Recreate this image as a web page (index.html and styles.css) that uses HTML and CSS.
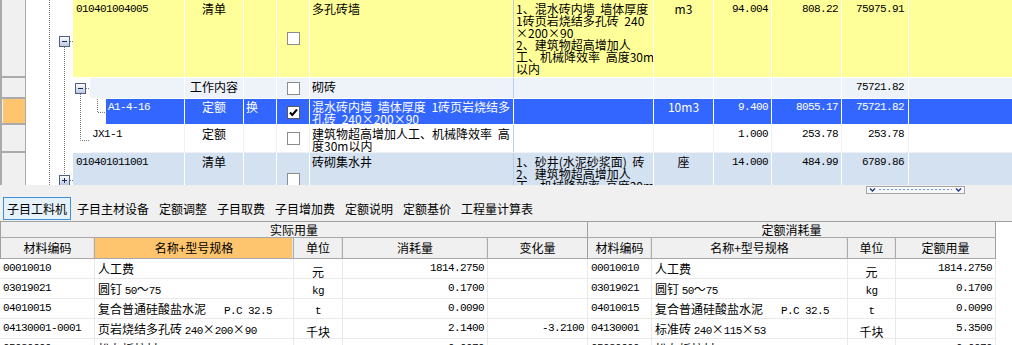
FILE: index.html
```html
<!DOCTYPE html>
<html lang="zh-CN">
<head>
<meta charset="utf-8">
<title>子目工料机</title>
<link rel="stylesheet" href="styles.css">
</head>
<body>
<div class="top">
  <div class="row r1">
    <div class="gut"></div>
    <div class="tree i0"></div>
    <div class="cells y">
      <div class="c code w0 m">010401004005</div>
      <div class="c type">清单</div>
      <div class="c hx"></div>
      <div class="c chk"><span class="cb"></span></div>
      <div class="c name">多孔砖墙</div>
      <div class="c desc">1、混水砖内墙 墙体厚度<br>1砖页岩烧结多孔砖 240<br>×200×90<br>2、建筑物超高增加人<br>工、机械降效率 高度30m<br>以内</div>
      <div class="c unit">m3</div>
      <div class="c qty m">94.004</div>
      <div class="c price m">808.22</div>
      <div class="c tot m">75975.91</div>
      <div class="c rest"></div>
    </div>
  </div>
  <div class="row r2">
    <div class="gut"></div>
    <div class="tree i1"></div>
    <div class="cells wk">
      <div class="c code w1 m"></div>
      <div class="c type">工作内容</div>
      <div class="c hx"></div>
      <div class="c chk"><span class="cb"></span></div>
      <div class="c name">砌砖</div>
      <div class="c desc"></div>
      <div class="c unit"></div>
      <div class="c qty m"></div>
      <div class="c price m"></div>
      <div class="c tot m">75721.82</div>
      <div class="c rest"></div>
    </div>
  </div>
  <div class="row r3">
    <div class="gut on"></div>
    <div class="tree i2"></div>
    <div class="cells sel">
      <div class="c code w2 m">A1-4-16</div>
      <div class="c type">定额</div>
      <div class="c hx">换</div>
      <div class="c chk"><span class="cb ck"><svg width="11" height="11" viewBox="0 0 11 11"><path d="M2 5.5L4.3 8L9 2.5" fill="none" stroke="#000" stroke-width="2"/></svg></span></div>
      <div class="c name">混水砖内墙 墙体厚度 1砖页岩烧结多<br>孔砖 240×200×90</div>
      <div class="c desc"></div>
      <div class="c unit">10m3</div>
      <div class="c qty m">9.400</div>
      <div class="c price m">8055.17</div>
      <div class="c tot m">75721.82</div>
      <div class="c rest"></div>
    </div>
  </div>
  <div class="row r4">
    <div class="gut"></div>
    <div class="tree i1"></div>
    <div class="cells w">
      <div class="c code w1 m">JX1-1</div>
      <div class="c type">定额</div>
      <div class="c hx"></div>
      <div class="c chk"><span class="cb"></span></div>
      <div class="c name">建筑物超高增加人工、机械降效率 高<br>度30m以内</div>
      <div class="c desc"></div>
      <div class="c unit"></div>
      <div class="c qty m">1.000</div>
      <div class="c price m">253.78</div>
      <div class="c tot m">253.78</div>
      <div class="c rest"></div>
    </div>
  </div>
  <div class="row r5">
    <div class="gut"></div>
    <div class="tree i0"></div>
    <div class="cells b">
      <div class="c code w0 m">010401011001</div>
      <div class="c type">清单</div>
      <div class="c hx"></div>
      <div class="c chk"><span class="cb"></span></div>
      <div class="c name">砖砌集水井</div>
      <div class="c desc">1、砂井(水泥砂浆面) 砖<br>2、建筑物超高增加人<br>工、机械降效率 高度30m<br>以内</div>
      <div class="c unit">座</div>
      <div class="c qty m">14.000</div>
      <div class="c price m">484.99</div>
      <div class="c tot m">6789.86</div>
      <div class="c rest"></div>
    </div>
  </div>
  <svg class="tree-lines" width="110" height="185" viewBox="0 0 110 185">
    <defs>
      <linearGradient id="bx" x1="0" y1="0" x2="0" y2="1">
        <stop offset="0" stop-color="#ffffff"/>
        <stop offset="1" stop-color="#b9c6dc"/>
      </linearGradient>
    </defs>
    <g stroke="#7a7a7a" stroke-dasharray="1 1" fill="none">
      <path d="M49.5 0V185"/>
      <path d="M64.5 47V175"/>
      <path d="M70 41.5H73"/>
      <path d="M86 88.5H90"/>
      <path d="M80.5 94V140.5H90"/>
      <path d="M97.5 99V112.5H106"/>
      <path d="M70 180.5H73"/>
    </g>
    <g stroke="#4f5f84" fill="url(#bx)">
      <rect x="59.5" y="36.5" width="10" height="10"/>
      <rect x="75.5" y="83.5" width="10" height="10"/>
      <rect x="59.5" y="175.5" width="10" height="10"/>
    </g>
    <g stroke="#1b2a5c" fill="none">
      <path d="M62 41.5H67"/>
      <path d="M78 88.5H83"/>
      <path d="M62 180.5H67M64.5 178V183"/>
    </g>
  </svg>
</div>

<div class="split">
  <svg class="handle" width="99" height="8" viewBox="0 0 99 8">
    <rect x="0.5" y="0.5" width="98" height="7" fill="#f8f8f8" stroke="#a4a4a4"/>
    <path d="M4 2.5L6.5 5L9 2.5M90 2.5L92.5 5L95 2.5" fill="none" stroke="#1c3780" stroke-width="1.4"/>
    <path d="M13 3.5H86" stroke="#6a94dc" stroke-dasharray="2 2"/>
  </svg>
</div>

<div class="tabs">
  <div class="tab on">子目工料机</div>
  <div class="tab">子目主材设备</div>
  <div class="tab">定额调整</div>
  <div class="tab">子目取费</div>
  <div class="tab">子目增加费</div>
  <div class="tab">定额说明</div>
  <div class="tab">定额基价</div>
  <div class="tab">工程量计算表</div>
</div>

<div class="grid">
  <div class="hd1 first s5">实际用量</div>
  <div class="hd1 s4">定额消耗量</div>

  <div class="hd2 first">材料编码</div>
  <div class="hd2 or">名称+型号规格</div>
  <div class="hd2">单位</div>
  <div class="hd2">消耗量</div>
  <div class="hd2 ge">变化量</div>
  <div class="hd2">材料编码</div>
  <div class="hd2">名称+型号规格</div>
  <div class="hd2">单位</div>
  <div class="hd2 ge">定额用量</div>

  <div class="d l m">00010010</div>
  <div class="d l">人工费</div>
  <div class="d c">元</div>
  <div class="d r m">1814.2750</div>
  <div class="d r m"></div>
  <div class="d l m">00010010</div>
  <div class="d l">人工费</div>
  <div class="d c">元</div>
  <div class="d r m">1814.2750</div>

  <div class="d l m">03019021</div>
  <div class="d l">圆钉 <span class="m">50</span>～<span class="m">75</span></div>
  <div class="d c m">kg</div>
  <div class="d r m">0.1700</div>
  <div class="d r m"></div>
  <div class="d l m">03019021</div>
  <div class="d l">圆钉 <span class="m">50</span>～<span class="m">75</span></div>
  <div class="d c m">kg</div>
  <div class="d r m">0.1700</div>

  <div class="d l m">04010015</div>
  <div class="d l">复合普通硅酸盐水泥<span class="m">   P.C 32.5</span></div>
  <div class="d c m">t</div>
  <div class="d r m">0.0090</div>
  <div class="d r m"></div>
  <div class="d l m">04010015</div>
  <div class="d l">复合普通硅酸盐水泥<span class="m">   P.C 32.5</span></div>
  <div class="d c m">t</div>
  <div class="d r m">0.0090</div>

  <div class="d l m">04130001-0001</div>
  <div class="d l">页岩烧结多孔砖 <span class="m">240</span>×<span class="m">200</span>×<span class="m">90</span></div>
  <div class="d c">千块</div>
  <div class="d r m">2.1400</div>
  <div class="d r m">-3.2100</div>
  <div class="d l m">04130001</div>
  <div class="d l">标准砖 <span class="m">240</span>×<span class="m">115</span>×<span class="m">53</span></div>
  <div class="d c">千块</div>
  <div class="d r m">5.3500</div>

  <div class="d l m">05030600</div>
  <div class="d l">松杂板枋材</div>
  <div class="d c m">m3</div>
  <div class="d r m">0.0070</div>
  <div class="d r m"></div>
  <div class="d l m">05030600</div>
  <div class="d l">松杂板枋材</div>
  <div class="d c m">m3</div>
  <div class="d r m">0.0070</div>
</div>
</body>
</html>
```
FILE: styles.css
```css
html, body {
  margin: 0;
  padding: 0;
}
body {
  width: 1012px;
  height: 345px;
  overflow: hidden;
  background: #ffffff;
  color: #000;
  font-family: "Noto Sans CJK SC", "Noto Sans", sans-serif;
  font-size: 12px;
  line-height: 12px;
}

.m {
  font-family: "Liberation Mono", "Noto Sans CJK SC", monospace;
  font-size: 11px;
  letter-spacing: -0.6px;
  word-spacing: 0;
}

/* ---------- top tree grid ---------- */
.top {
  position: relative;
  height: 185px;
  overflow: hidden;
  background: #ffffff;
}
.row {
  display: flex;
}
.r1 { height: 78px; }
.r2 { height: 21px; }
.r3 { height: 26px; }
.r4 { height: 28px; }
.r5 { height: 54px; }

.gut {
  flex: none;
  width: 26px;
  box-sizing: border-box;
  background: #f0f0f0;
  border-left: 2px solid #aaaaaa;
  border-right: 1px solid #aaaaaa;
  border-bottom: 2px solid #aaaaaa;
}
.gut.on {
  background: #ffc46e;
  box-shadow: inset 1px 0 0 #f0f0f0;
}

.tree { flex: none; }
.i0 { width: 47px; }
.i1 { width: 64px; }
.i2 { width: 80px; }

.cells {
  flex: 1;
  display: flex;
  box-sizing: border-box;
  border-bottom: 1px solid #ffffff;
}
.y   { background: #ffff99; }
.wk  { background: #eef3f9; }
.sel { background: #3366ff; color: #ffffff; }
.w   { background: #ffffff; border-bottom-color: #eef2f7; }
.b   { background: #d3e1f1; }

.c {
  flex: none;
  box-sizing: border-box;
  border-right: 1px solid #ffffff;
  padding: 3px 2px 0;
  white-space: nowrap;
  overflow: hidden;
  word-spacing: 3px;
}
.w .c { border-right-color: #eef2f7; }
.r3 .c { padding-top: 2px; }

.code { padding-left: 2px; }
.w0 { width: 112px; padding-left: 3px; }
.w1 { width: 95px; }
.w2 { width: 79px; }
.type { width: 59px; text-align: center; }
.hx { width: 33px; }
.chk {
  width: 33px;
  padding: 0;
  display: flex;
  align-items: center;
  justify-content: center;
}
.name { width: 204px; border-right-color: #b9cde6; }
.w .name { border-right-color: #b9cde6; }
.sel .name { border-right-color: #ffffff; }
.desc { width: 140px; }
.unit { width: 60px; text-align: center; }
.qty { width: 58px; text-align: right; padding-right: 3px; }
.price { width: 70px; text-align: right; padding-right: 3px; }
.tot { width: 67px; text-align: right; padding-right: 4px; }
.rest { flex: 1; border-right: 0; }

.cb {
  display: block;
  width: 13px;
  height: 13px;
  box-sizing: border-box;
  border: 1px solid #8c8c8c;
  background: #ffffff;
}
.cb.ck {
  border-color: #5a5a5a;
}
.cb svg { display: block; margin: 0; }

.tree-lines {
  position: absolute;
  left: 0;
  top: 0;
  pointer-events: none;
}

/* ---------- splitter ---------- */
.split {
  height: 11px;
  background: #f0f0f0;
  display: flex;
  justify-content: flex-end;
  padding-right: 47px;
}
.handle {
  display: block;
  margin-top: 1px;
}

/* ---------- tabs ---------- */
.tabs {
  height: 26px;
  box-sizing: border-box;
  display: flex;
  gap: 2px;
  padding: 1px 0 0 3px;
  background: #f0f0f0;
  border-bottom: 1px solid #a0a0a0;
}
.tab {
  height: 23px;
  box-sizing: border-box;
  padding: 0 3px;
  border: 1px solid transparent;
  display: flex;
  align-items: center;
  white-space: nowrap;
}
.tab.on {
  border-color: #3d8fd6;
  background: #e5f1fb;
}

/* ---------- lower grid ---------- */
.grid {
  display: grid;
  width: 996px;
  grid-template-columns: 95px 199px 49px 145px 100px 64px 196px 48px 100px;
}
.hd1 {
  height: 16px;
  box-sizing: border-box;
  background: #f0f0f0;
  border-right: 1px solid #a0a0a0;
  border-bottom: 1px solid #a8a8a8;
  text-align: center;
  line-height: 15px;
}
.s5 { grid-column: span 5; }
.s4 { grid-column: span 4; }
.first { border-left: 1px solid #a0a0a0; }
.hd2 {
  height: 21px;
  box-sizing: border-box;
  background: #f0f0f0;
  border-right: 1px solid #acacac;
  box-shadow: inset -1px 0 0 #e2e2e2;
  border-bottom: 1px solid #a8a8a8;
  text-align: center;
  line-height: 20px;
}
.hd2.or { background: #ffc46e; }
.hd2.ge { border-right-color: #a0a0a0; box-shadow: none; }

.d {
  height: 20px;
  box-sizing: border-box;
  border-right: 1px solid #e9e9e9;
  border-bottom: 1px solid #e9e9e9;
  line-height: 19px;
  white-space: pre;
  overflow: hidden;
}
.d.l { padding-left: 3px; }
.d.c { text-align: center; }
.d.r { text-align: right; padding-right: 3px; }
```
